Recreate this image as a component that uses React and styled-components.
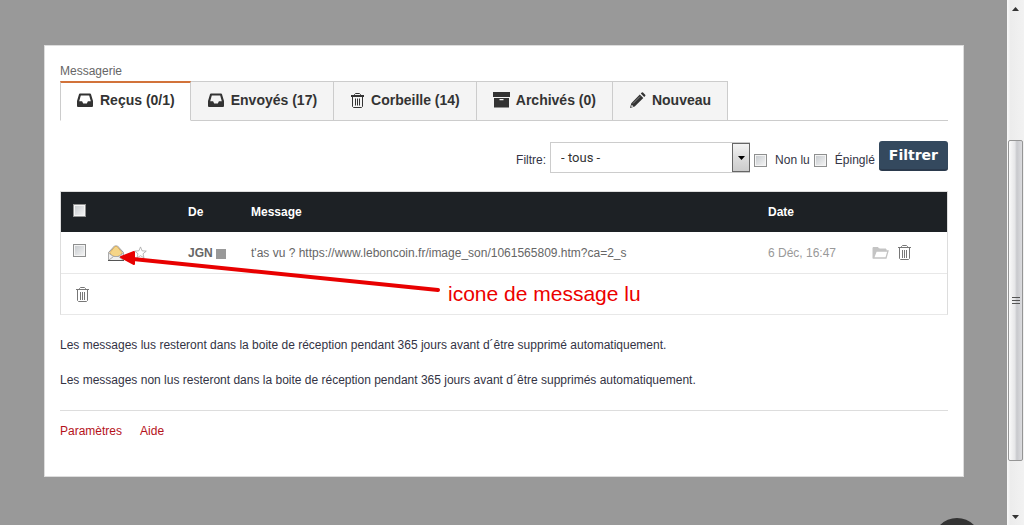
import React from "react";
import styled, { createGlobalStyle, css } from "styled-components";

const Global = createGlobalStyle`
  * { box-sizing: border-box; }
  body { margin: 0; background: #999; font: 12px/18px "Liberation Sans", Arial, sans-serif; color: #334; }
  button, input, select { font: inherit; margin: 0; }
`;

const Page = styled.div`
  display: flex;
  min-height: 100vh;
  position: relative;
  overflow: hidden;
`;
const Main = styled.main`
  flex: 1;
  min-width: 0;
  padding: 45px 43px 48px 44px;
`;
const Card = styled.section`
  background: #fff;
  border: 1px solid #ddd;
  padding: 16px 15px 36px;
`;
const Title = styled.h1`
  margin: 0;
  font-size: 12px;
  line-height: 19px;
  font-weight: 400;
  color: #666;
`;

const Tabs = styled.nav`
  display: flex;
  height: 40px;
  border-bottom: 1px solid #ccc;
`;
const Tab = styled.a`
  display: flex;
  align-items: center;
  gap: 6px;
  height: 40px;
  padding: 0 16px 2px;
  font-weight: 700;
  font-size: 14px;
  color: #333;
  text-decoration: none;
  white-space: nowrap;
  background: #f4f4f4;
  border: 1px solid #ccc;
  border-left-width: 0;
  ${(p) => p.$active && css`
    padding: 0 15px 3px;
    background: #fff;
    border-left-width: 1px;
    border-top: 2px solid #d2733a;
    border-bottom-color: #fff;
  `}
`;
const Svg = styled.svg`
  display: block;
  flex: none;
`;

const Filter = styled.form`
  display: flex;
  justify-content: flex-end;
  margin: 20px 0 18px;
  height: 32px;
`;
const Label = styled.label`
  display: flex;
  align-items: center;
  padding-top: 6px;
  margin-right: 4px;
  gap: 8px;
`;
const SelectBox = styled.div`
  display: flex;
  position: relative;
  width: 200px;
  height: 31px;
  margin: 1px 4px 0 0;
`;
const Select = styled.select`
  appearance: none;
  width: 100%;
  padding: 0 28px 0 10px;
  border: 1px solid #ccc;
  border-radius: 0;
  background: #fff;
  color: #333;
  font-family: Roboto, sans-serif;
  font-size: 13px;
`;
const SelectArrow = styled.span`
  position: absolute;
  right: 0;
  top: 1px;
  bottom: 1px;
  width: 18px;
  display: grid;
  place-items: center;
  pointer-events: none;
  border: 1px solid #666;
  background: linear-gradient(#f4f4f4, #ddd 50%, #ccc);
`;
const Check = styled.input`
  appearance: none;
  display: block;
  width: 13px;
  height: 13px;
  border: 1px solid #8e8f8f;
  background: linear-gradient(135deg, #c4c8cc, #f6f6f6);
  box-shadow: inset 0 0 0 1px #f4f4f4;
`;
const Submit = styled.button`
  height: 30px;
  padding: 0 10px;
  border: 0;
  border-bottom: 2px solid #2b3a4d;
  border-radius: 3px;
  background: #34495e;
  color: #fff;
  font: 700 14px/28px "DejaVu Sans", sans-serif;
`;

const TableWrap = styled.div`
  position: relative;
`;
const Table = styled.table`
  width: 100%;
  table-layout: fixed;
  border-collapse: separate;
  border-spacing: 0;
  border: 1px solid #ddd;
  border-bottom-color: #e8e8e8;
`;
const Row = styled.tr`
  height: 41px;
`;
const HeadRow = styled.tr`
  height: 40px;
`;
const cell = css`
  padding: 0 0 0 12px;
  text-align: left;
  white-space: nowrap;
`;
const Th = styled.th`
  ${cell}
  width: ${(p) => p.$w || "auto"};
  background: #1d2125;
  color: #fff;
  ${Check} { margin-bottom: 4px; }
`;
const Td = styled.td`
  ${cell}
  color: ${(p) => p.$color || "#666"};
  border-top: ${(p) => (p.$line ? "1px solid #e8e8e8" : "0")};
  ${Check} { margin-bottom: 5px; }
`;
const Inline = styled.div`
  display: flex;
  align-items: center;
  gap: ${(p) => p.$gap || "8px"};
`;
const IconButton = styled.button`
  display: block;
  padding: 0;
  border: 0;
  background: none;
  color: #777;
`;
const BulkActions = styled.div`
  display: flex;
  padding-left: 2px;
`;
const Status = styled.span`
  width: 10px;
  height: 10px;
  margin-top: 2px;
  background: #999;
`;
const Arrow = styled.svg`
  position: absolute;
  left: 56px;
  top: 56px;
  pointer-events: none;
`;
const Note = styled.span`
  position: absolute;
  left: 388px;
  top: 91px;
  font-size: 21px;
  line-height: 24px;
  color: #ec0000;
  white-space: nowrap;
`;

const Info = styled.p`
  margin: 0 0 17px;
`;
const Infos = styled.div`
  padding: 21px 0 4px;
  border-bottom: 1px solid #ddd;
`;
const Links = styled.div`
  display: flex;
  gap: 18px;
  margin-top: 11px;
`;
const Link = styled.a`
  color: #b5121b;
  text-decoration: none;
`;

const RoundButton = styled.button`
  position: absolute;
  right: 43px;
  bottom: -41px;
  width: 48px;
  height: 48px;
  padding: 0;
  border: 0;
  border-radius: 50%;
  background: #333;
`;
const Scrollbar = styled.div`
  width: 17px;
  flex: none;
  display: flex;
  flex-direction: column;
  background: linear-gradient(90deg, #fafafa, #ececec 20%, #f2f2f2);
`;
const ScrollEnd = styled.div`
  height: 17px;
  display: grid;
  place-items: center;
`;
const Track = styled.div`
  flex: ${(p) => p.$part} 0 0;
`;
const Thumb = styled.div`
  flex: 319 0 0;
  margin: 0 1px;
  border: 1px solid #959595;
  border-radius: 2px;
  background: linear-gradient(90deg, #fafafa, #e6e6e8 45%, #c8c9cd 60%, #dcdcdf);
  display: grid;
  place-items: center;
`;

const Inbox = () => (
  <Svg width="18" height="16" viewBox="0 0 18 16">
    <path fill="#333" fillRule="evenodd" d="M4 1.5h10a1 1 0 0 1 1 .7L17 9v5a1 1 0 0 1-1 1H2a1 1 0 0 1-1-1V9l2-6.800a1 1 0 0 1 1-.7zM4.800 3.500 3.200 9.200h2.900L7.200 11.500h3.600l1.100-2.300h2.900L13.200 3.500z" />
  </Svg>
);
const Trash = () => (
  <Svg width="15" height="17" viewBox="0 0 15 17" fill="none" stroke="currentColor">
    <path d="M1 3.500h13M4.500 3.500v-1l1-1h4l1 1v1M2.500 4v10.500l1 1h8l1-1V4M5.500 6v8M7.500 6v8M9.500 6v8" />
  </Svg>
);
const TabTrash = () => (
  <Svg width="15" height="17" viewBox="0 0 15 17" fill="none" stroke="#333">
    <path d="M1 3.500h13M1 4.500h13M4.500 3.500v-1l1-1h4l1 1v1M2.500 4v10.500l1 1h8l1-1V4M5.500 6.500v7M7.500 6.500v7M9.500 6.500v7" />
  </Svg>
);
const Archive = () => (
  <Svg width="17" height="16" viewBox="0 0 17 16">
    <path fill="#333" fillRule="evenodd" d="M0 0h17v5H0zM1 6h15v9.500H1zM6.500 7v1.200h4V7z" />
  </Svg>
);
const Pencil = () => (
  <Svg width="17" height="17" viewBox="0 0 17 17" fill="#333">
    <path d="m11.800 1.500 1-.9q.6-.5 1.200 0l2.200 2.200q.6.600 0 1.200l-1 1zM10.800 2.500l3.500 3.500-8.600 8.600L1 16l1.300-4.800z" />
    <path d="m4 11.500 7-7" stroke="#aaa" strokeWidth=".7" />
    <path d="m2.700 12.800 1.800 1.800-1.800.5-.5-.5z" fill="#f4f4f4" />
  </Svg>
);
const Envelope = () => (
  <Svg width="18" height="18" viewBox="0 0 18 18">
    <path d="M.5 8.500 6.500 2h3l6 6.500v8H.5z" fill="#e6e6e6" stroke="#999" />
    <path d="m2 8.500 5-6h2l5 6-1 2.500-5 2-5-2z" fill="#f5d588" stroke="#dcb060" />
    <path d="m.5 9 5 3.500h5l5-3.500v7.500H.5zM1 16l4.500-3.500M15 16l-4.500-3.500" fill="#efefef" stroke="#aaa" />
    <path d="M0 16.500h16" stroke="#555" />
  </Svg>
);
const Star = () => (
  <Svg width="13" height="13" viewBox="0 0 14 14">
    <path d="m7 1 1.700 4.200 4.500.3-3.500 2.900 1.100 4.400L7 10.400l-3.800 2.400 1.100-4.400L.8 5.500l4.500-.3z" fill="none" stroke="#aaa" strokeWidth=".9" />
  </Svg>
);
const Folder = () => (
  <Svg width="17" height="13" viewBox="0 0 17 13">
    <path d="M1 12V1.500h5l1.500 1.500H14v2" fill="#c4c4c4" stroke="#c4c4c4" />
    <path d="m1.500 12 2.700-7H16l-2 7z" fill="#fff" stroke="#c4c4c4" strokeWidth="1.300" />
  </Svg>
);

const TABS = [
  { label: "Reçus (0/1)", Icon: Inbox, active: true },
  { label: "Envoyés (17)", Icon: Inbox },
  { label: "Corbeille (14)", Icon: TabTrash },
  { label: "Archivés (0)", Icon: Archive },
  { label: "Nouveau", Icon: Pencil },
];

export default function App() {
  return (
    <Page>
      <Global />
      <Main>
        <Card>
          <Title>Messagerie</Title>
          <Tabs>
            {TABS.map(({ label, Icon, active }) => (
              <Tab key={label} href="#" $active={active}>
                <Icon />
                {label}
              </Tab>
            ))}
          </Tabs>
          <Filter onSubmit={(e) => e.preventDefault()}>
            <Label htmlFor="filter">Filtre:</Label>
            <SelectBox>
              <Select id="filter">
                <option>- tous -</option>
              </Select>
              <SelectArrow>
                <Svg width="7" height="4" viewBox="0 0 7 4"><path d="M0 0h7L3.500 4z" /></Svg>
              </SelectArrow>
            </SelectBox>
            <Label><Check type="checkbox" />Non lu</Label>
            <Label><Check type="checkbox" />Épinglé</Label>
            <Submit>Filtrer</Submit>
          </Filter>
          <TableWrap>
            <Table>
              <thead>
                <HeadRow>
                  <Th $w="35px"><Check type="checkbox" aria-label="Tout" /></Th>
                  <Th $w="80px" />
                  <Th $w="63px">De</Th>
                  <Th>Message</Th>
                  <Th $w="104px">Date</Th>
                  <Th $w="87px" />
                </HeadRow>
              </thead>
              <tbody>
                <Row>
                  <Td><Check type="checkbox" aria-label="JGN" /></Td>
                  <Td><Inline><Envelope /><Star /></Inline></Td>
                  <Td><Inline $gap="3px"><strong>JGN</strong><Status /></Inline></Td>
                  <Td>t'as vu ? https://www.leboncoin.fr/image_son/1061565809.htm?ca=2_s</Td>
                  <Td $color="#999">6 Déc, 16:47</Td>
                  <Td>
                    <Inline>
                      <IconButton aria-label="Archiver"><Folder /></IconButton>
                      <IconButton aria-label="Supprimer"><Trash /></IconButton>
                    </Inline>
                  </Td>
                </Row>
                <Row>
                  <Td $line colSpan={6}>
                    <BulkActions>
                      <IconButton aria-label="Supprimer la sélection"><Trash /></IconButton>
                    </BulkActions>
                  </Td>
                </Row>
              </tbody>
            </Table>
            <Arrow width="328" height="48" viewBox="0 0 328 48">
              <path d="M12 11.500 322 43" stroke="#e80000" strokeWidth="4" strokeLinecap="round" />
              <path d="M5 10 18 5v12z" fill="#e80000" stroke="#e80000" strokeWidth="2" strokeLinejoin="round" />
            </Arrow>
            <Note>icone de message lu</Note>
          </TableWrap>
          <Infos>
            <Info>Les messages lus resteront dans la boite de réception pendant 365 jours avant d´être supprimé automatiquement.</Info>
            <Info>Les messages non lus resteront dans la boite de réception pendant 365 jours avant d´être supprimés automatiquement.</Info>
          </Infos>
          <Links>
            <Link href="#">Paramètres</Link>
            <Link href="#">Aide</Link>
          </Links>
        </Card>
      </Main>
      <Scrollbar>
        <ScrollEnd><Svg width="7" height="4" viewBox="0 0 7 4"><path d="M0 4h7L3.500 0z" fill="#333" /></Svg></ScrollEnd>
        <Track $part={123} />
        <Thumb>
          <Svg width="8" height="8" viewBox="0 0 8 8"><path d="M0 .5h8M0 3.500h8M0 6.500h8" stroke="#555" /></Svg>
        </Thumb>
        <Track $part={47} />
        <ScrollEnd><Svg width="7" height="4" viewBox="0 0 7 4"><path d="M0 0h7L3.500 4z" fill="#333" /></Svg></ScrollEnd>
      </Scrollbar>
      <RoundButton aria-label="Haut de page" />
    </Page>
  );
}
